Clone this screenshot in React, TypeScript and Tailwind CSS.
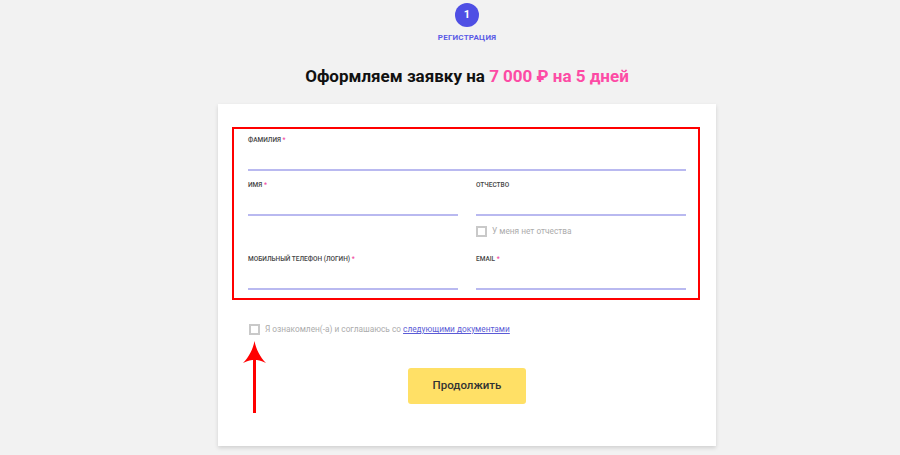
import React from 'react';

function Label({ text, required }: { text: string; required?: boolean }) {
  return (
    <div className="h-[10px] text-[6.5px] leading-[10px] font-medium uppercase text-[#444]">
      {text}
      {required && <span className="text-[#f0489e]"> *</span>}
    </div>
  );
}

function Field({ label, required }: { label: string; required?: boolean }) {
  return (
    <div className="flex flex-col">
      <Label text={label} required={required} />
      <input
        className="h-[26px] w-full border-b-2 border-[#b9b9f0] bg-transparent text-[12px] outline-none"
        type="text"
      />
    </div>
  );
}

function Checkbox({ children }: { children: React.ReactNode }) {
  return (
    <label className="flex items-center gap-[5px] text-[8.3px] leading-[11px] text-[#acacac]">
      <span className="h-[11px] w-[11px] shrink-0 border-2 border-[#c9c9c9] bg-white" />
      <span>{children}</span>
    </label>
  );
}

export default function App() {
  return (
    <div className="min-h-screen bg-[#f2f2f2] font-['Roboto',sans-serif]">
      <div className="flex flex-col items-center pl-[34px] pt-[3px]">
        <div className="flex h-6 w-6 items-center justify-center rounded-full bg-[#4f4fe4] text-[11px] font-bold text-white">
          1
        </div>
        <div className="mt-[6px] text-[8px] leading-[10px] font-bold uppercase tracking-[0.2px] text-[#5a5ae6]">
          Регистрация
        </div>
        <h1 className="mt-[21px] text-[17px] leading-6 font-bold text-[#111]">
          Оформляем заявку на <span className="text-[#fd4ba5]">7 000 ₽ на 5 дней</span>
        </h1>

        <div className="relative mt-4 w-[498px] bg-white px-[30px] pt-[31px] pb-[42px] shadow-[0_2px_4px_rgba(0,0,0,0.14)]">
          <div className="relative">
            <div className="pointer-events-none absolute -top-2 -right-[14px] -bottom-[10px] -left-4 border-2 border-[#f00]" />
            <Field label="Фамилия" required />
            <div className="mt-[9px] grid grid-cols-2 gap-x-[18px]">
              <Field label="Имя" required />
              <div className="flex flex-col">
                <Field label="Отчество" />
                <div className="mt-[10px]">
                  <Checkbox>У меня нет отчества</Checkbox>
                </div>
              </div>
            </div>
            <div className="mt-[17px] grid grid-cols-2 gap-x-[18px]">
              <Field label="Мобильный телефон (логин)" required />
              <Field label="Email" required />
            </div>
          </div>

          <div className="mt-[34px] pl-px">
            <Checkbox>
              Я ознакомлен(-а) и соглашаюсь со{' '}
              <a className="text-[#5b5bd6] underline">следующими документами</a>
            </Checkbox>
          </div>

          <div className="mt-[33px] flex justify-center">
            <button className="h-9 w-[118px] rounded-[3px] bg-[#ffe066] text-[11.5px] font-medium text-[#333]">
              Продолжить
            </button>
          </div>

          <svg
            className="absolute left-[25px] top-[237px]"
            width="23"
            height="72"
            viewBox="0 0 23 72"
          >
            <rect x="10" y="16" width="3" height="56" fill="#f00" />
            <path
              d="M11.5 0 C13 8 17 16 23 22 C18 19.5 14.5 19 11.5 19 C8.5 19 5 19.5 0 22 C6 16 10 8 11.5 0 Z"
              fill="#f00"
            />
          </svg>
        </div>
      </div>
    </div>
  );
}
